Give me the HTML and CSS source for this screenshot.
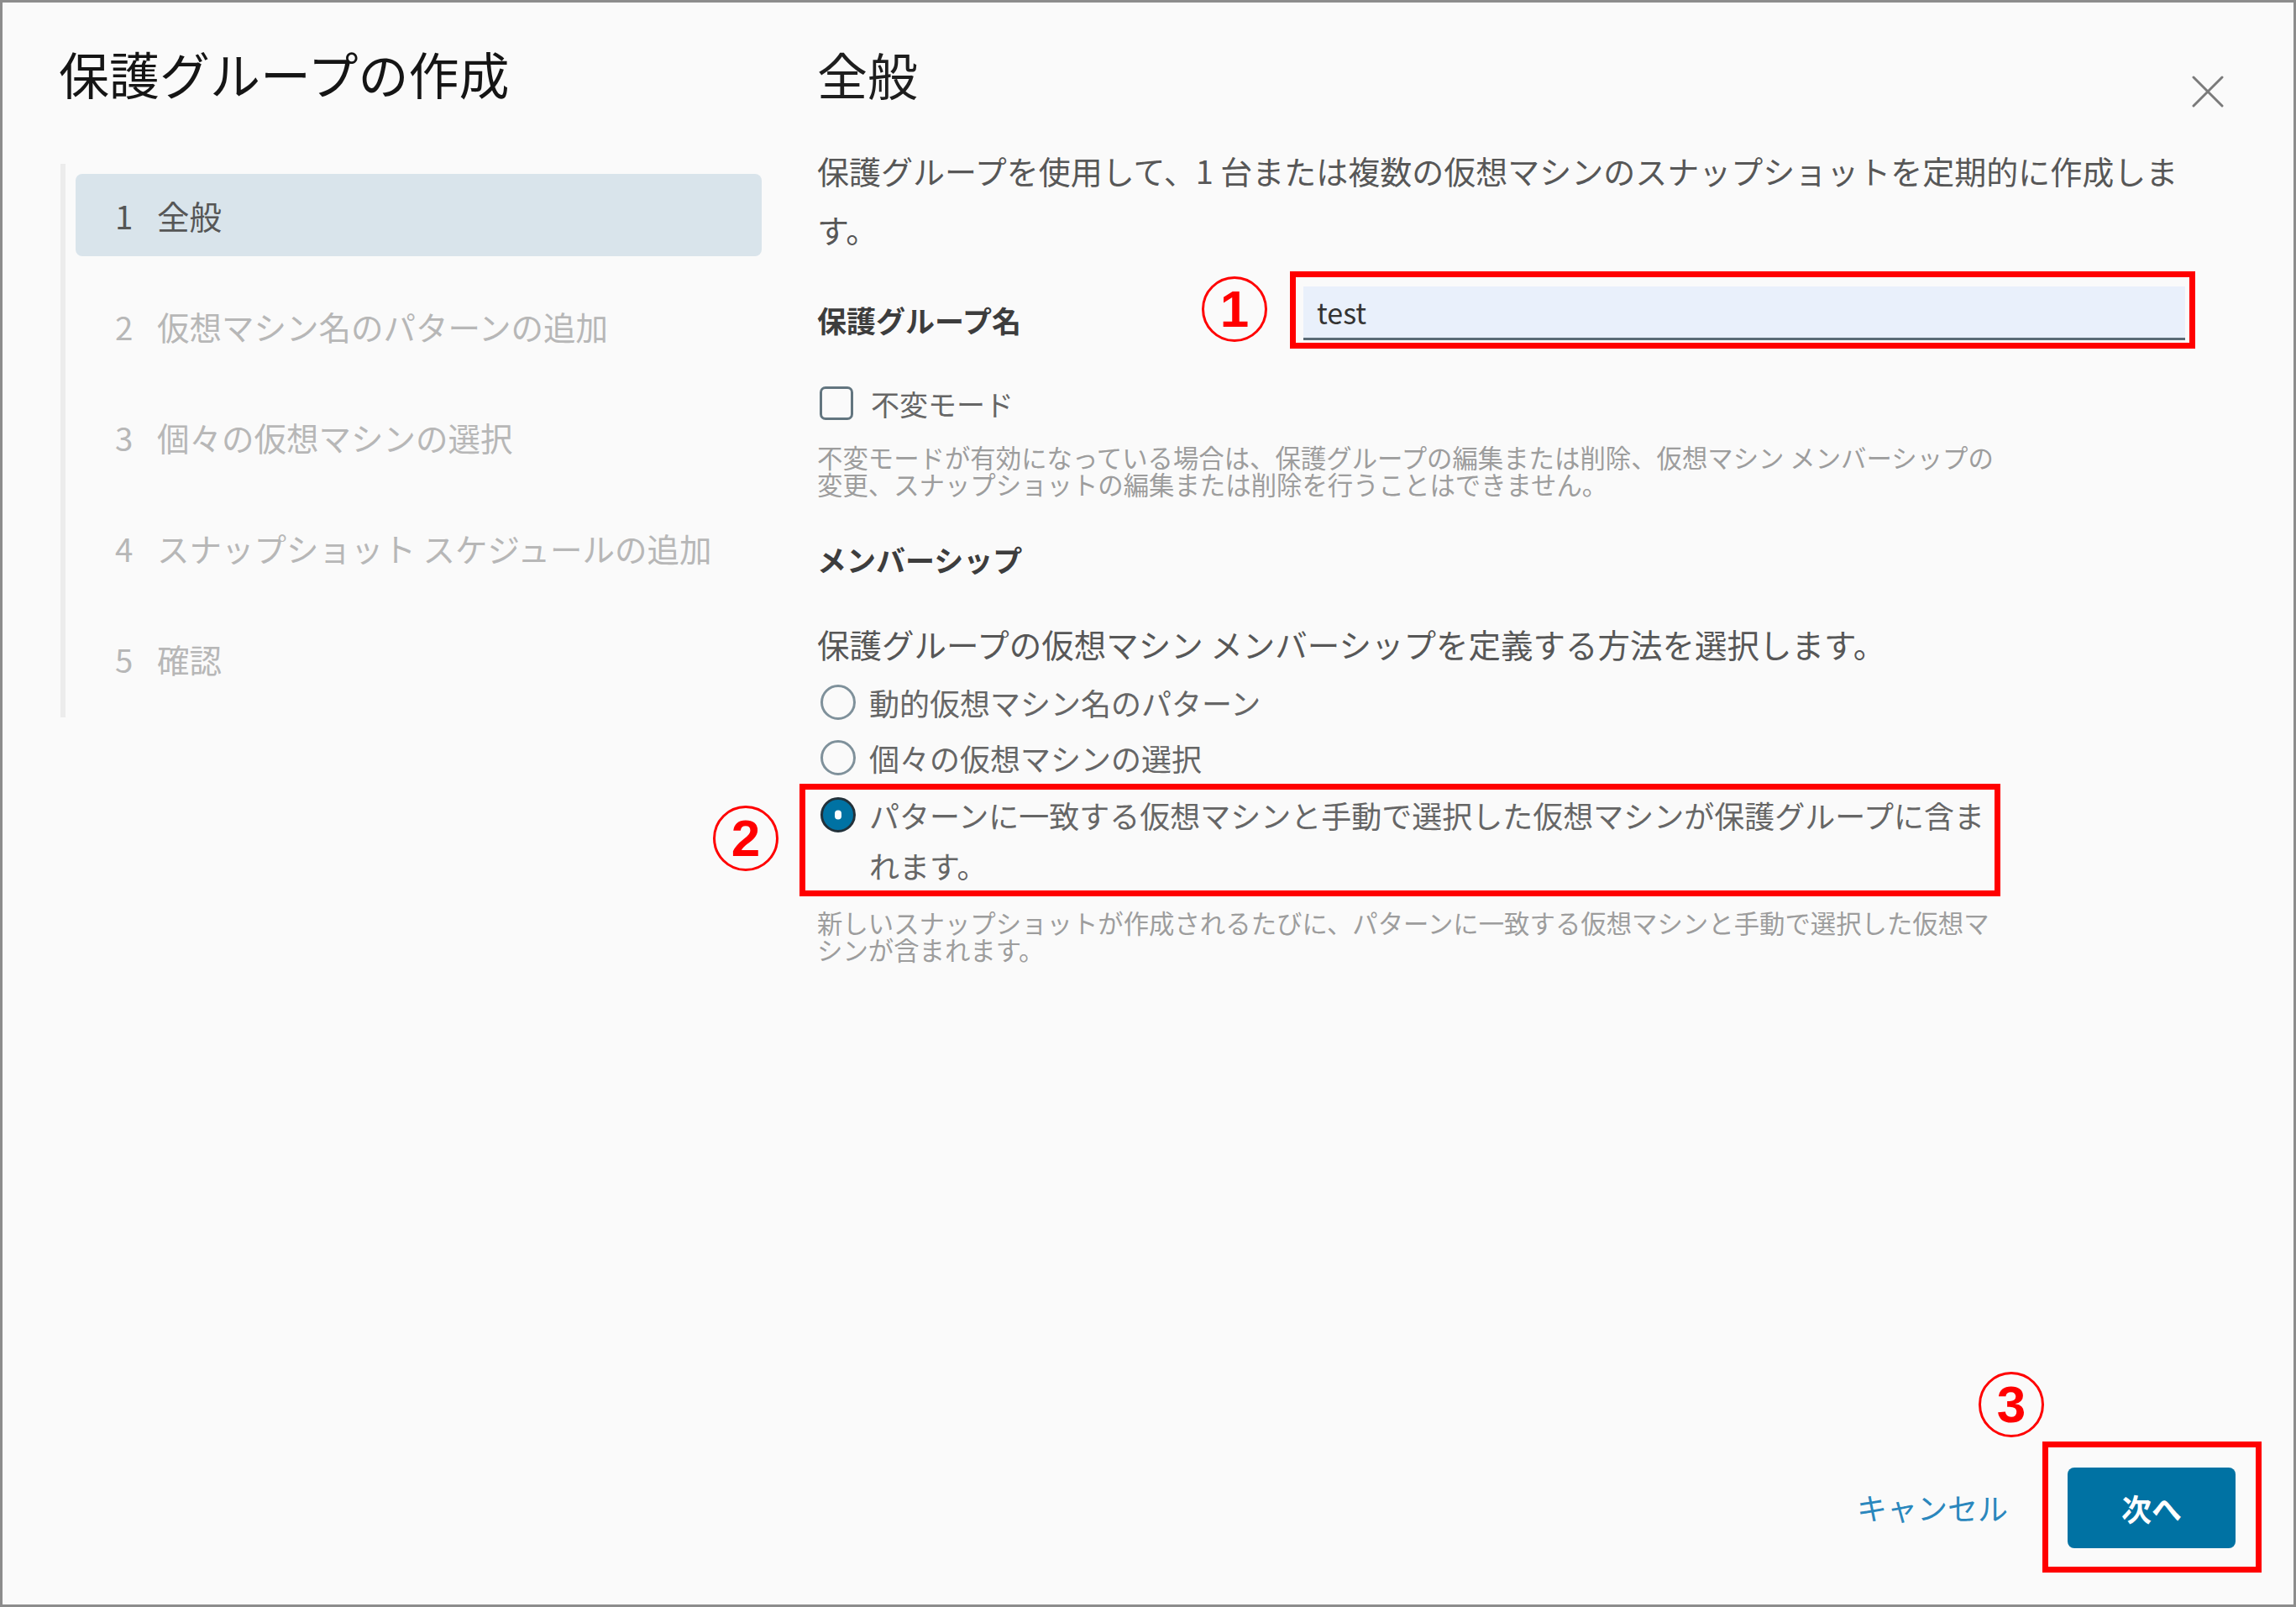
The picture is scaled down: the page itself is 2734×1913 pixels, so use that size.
FILE: index.html
```html
<!DOCTYPE html>
<html lang="ja">
<head>
  <meta charset="UTF-8" />
  <title>保護グループの作成</title>
  <link rel="stylesheet" href="styles.css">
</head>
<body>
  <div class="dialog">

    <!-- Wizard steps -->
    <aside class="sidebar">
      <h1 class="dialog-title">保護グループの作成</h1>
      <ol class="steps">
        <li class="step active"><span class="step-num">1</span>全般</li>
        <li class="step"><span class="step-num">2</span>仮想マシン名のパターンの追加</li>
        <li class="step"><span class="step-num">3</span>個々の仮想マシンの選択</li>
        <li class="step"><span class="step-num">4</span>スナップショット スケジュールの追加</li>
        <li class="step"><span class="step-num">5</span>確認</li>
      </ol>
    </aside>

    <main class="content">
      <div class="content-header">
        <h2 class="content-title">全般</h2>
        <button class="close-btn" aria-label="閉じる">
          <svg width="38" height="38" viewBox="0 0 38 38">
            <path d="M2 2 L36 36 M36 2 L2 36" stroke="#7a7a7a" stroke-width="3" fill="none" stroke-linecap="round" />
          </svg>
        </button>
      </div>

      <p class="intro">保護グループを使用して、1 台または複数の仮想マシンのスナップショットを定期的に作成します。</p>

      <div class="form-row">
        <label class="field-label" for="groupName">保護グループ名</label>
        <div class="mark mark-input">
          <span class="callout callout-1">1</span>
          <input type="text" id="groupName" class="text-input" value="test" autocomplete="off" />
        </div>
      </div>

      <label class="check-row">
        <span class="checkbox"></span>
        <span>不変モード</span>
      </label>
      <p class="helper">不変モードが有効になっている場合は、保護グループの編集または削除、仮想マシン メンバーシップの変更、スナップショットの編集または削除を行うことはできません。</p>

      <div class="section-label">メンバーシップ</div>
      <p class="prompt">保護グループの仮想マシン メンバーシップを定義する方法を選択します。</p>

      <div class="radio-group">
        <div class="radio-row">
          <span class="radio"></span>
          <span class="radio-text">動的仮想マシン名のパターン</span>
        </div>
        <div class="radio-row">
          <span class="radio"></span>
          <span class="radio-text">個々の仮想マシンの選択</span>
        </div>
        <div class="mark mark-radio">
          <span class="callout callout-2">2</span>
          <div class="radio-row">
            <span class="radio checked"></span>
            <span class="radio-text">パターンに一致する仮想マシンと手動で選択した仮想マシンが保護グループに含まれます。</span>
          </div>
        </div>
      </div>
      <p class="helper helper-last">新しいスナップショットが作成されるたびに、パターンに一致する仮想マシンと手動で選択した仮想マシンが含まれます。</p>

      <div class="footer">
        <a class="cancel-link">キャンセル</a>
        <div class="mark mark-button">
          <span class="callout callout-3">3</span>
          <button class="next-btn">次へ</button>
        </div>
      </div>
    </main>

  </div>
</body>
</html>
```

FILE: styles.css
```css
body {
  margin: 0;
  background: #fafafa;
  font-family: "Noto Sans CJK JP", "Noto Sans", sans-serif;
}

.dialog {
  width: 2734px;
  height: 1913px;
  box-sizing: border-box;
  border: 3px solid #8c8c8c;
  background: #fafafa;
  display: flex;
}

/* Sidebar / steps */
.sidebar {
  width: 970px;
  flex-shrink: 0;
  box-sizing: border-box;
  padding: 48px 0 0 67px;
}

.dialog-title {
  margin: 0;
  font-size: 60px;
  line-height: 72px;
  font-weight: 400;
  color: #151515;
}

.steps {
  list-style: none;
  margin: 72px 0 0 2px;
  padding: 12px 0 21px 12px;
  border-left: 6px solid #ececec;
  display: flex;
  flex-direction: column;
  gap: 34px;
}

.step {
  width: 817px;
  height: 98px;
  box-sizing: border-box;
  padding-left: 47px;
  display: flex;
  align-items: center;
  font-size: 38.5px;
  color: #b7b7b7;
  border-radius: 8px;
}

.step.active {
  background: #d9e4eb;
  color: #565656;
}

.step-num {
  width: 50px;
  flex-shrink: 0;
}

/* Main panel */
.content {
  flex: 1;
  display: flex;
  flex-direction: column;
  padding: 49px 38px 38px 0;
  min-width: 0;
}

.content-header {
  display: flex;
  justify-content: space-between;
  align-items: flex-start;
  height: 72px;
}

.content-title {
  margin: 0;
  font-size: 60px;
  line-height: 72px;
  font-weight: 400;
  color: #1e1e1e;
}

.close-btn {
  margin: 38px 45px 0 0;
  padding: 0;
  width: 38px;
  height: 38px;
  border: none;
  background: none;
  cursor: pointer;
}

.close-btn svg {
  display: block;
}

.intro {
  margin: 44px 0 0;
  max-width: 1650px;
  font-size: 38px;
  line-height: 70px;
  color: #575757;
}

.form-row {
  display: flex;
  margin-top: 15px;
}

.field-label {
  width: 563px;
  flex-shrink: 0;
  padding-top: 34px;
  font-size: 35px;
  line-height: 48px;
  font-weight: 700;
  color: #3d3d3d;
}

/* Red annotation boxes */
.mark {
  position: relative;
  border: 7px solid #ff0000;
}

.mark-input {
  padding: 11px 5px 3px 9px;
}

.mark-radio {
  margin: -5px 0 0 -21px;
  padding: 0 0 0 14px;
  align-self: flex-start;
}

.mark-button {
  padding: 24px 24px 22px 23px;
}

.callout {
  position: absolute;
  width: 78px;
  height: 78px;
  box-sizing: border-box;
  border: 3px solid #ff0000;
  border-radius: 50%;
  display: flex;
  justify-content: center;
  align-items: center;
  font-family: "Liberation Sans", Arial, sans-serif;
  font-weight: 700;
  font-size: 62px;
  line-height: 1;
  color: #ff0000;
}

.callout-1 {
  left: -112px;
  top: -1px;
}

.callout-2 {
  left: -110px;
  top: 19px;
}

.callout-3 {
  left: -83px;
  top: -90px;
}

.text-input {
  display: block;
  width: 1050px;
  height: 64px;
  box-sizing: border-box;
  border: none;
  border-bottom: 3px solid #5b6b76;
  background: #e9f0fb;
  padding: 0 16px;
  font-family: "Noto Sans CJK JP", "Noto Sans", sans-serif;
  font-size: 34px;
  color: #333;
  outline: none;
}

/* Checkbox */
.check-row {
  margin-top: 41px;
  height: 48px;
  display: flex;
  align-items: center;
  font-size: 34px;
  color: #666;
}

.checkbox {
  width: 40px;
  height: 40px;
  box-sizing: border-box;
  margin: 0 21px 0 3px;
  border: 3px solid #62757f;
  border-radius: 7px;
}

.helper {
  margin: 24px 0 0;
  width: 1415px;
  font-size: 30.4px;
  line-height: 32px;
  color: #9d9d9d;
}

.helper-last {
  margin-top: 15px;
}

.section-label {
  margin-top: 50px;
  font-size: 35px;
  line-height: 48px;
  font-weight: 700;
  color: #3d3d3d;
}

.prompt {
  margin: 52px 0 0;
  font-size: 38.5px;
  line-height: 48px;
  color: #575757;
}

/* Radios */
.radio-group {
  margin-top: 16px;
  display: flex;
  flex-direction: column;
  gap: 6px;
}

.radio-row {
  display: flex;
  align-items: flex-start;
}

.radio {
  width: 42px;
  height: 42px;
  box-sizing: border-box;
  flex-shrink: 0;
  margin: 9px 16px 0 4px;
  border: 3px solid #7f919b;
  border-radius: 50%;
  position: relative;
}

.radio.checked {
  background: #0072a3;
  border-color: #22313a;
}

.radio.checked::after {
  content: "";
  position: absolute;
  left: 50%;
  top: 50%;
  width: 8px;
  height: 11px;
  border-radius: 4px;
  background: #fff;
  transform: translate(-50%, -50%);
}

.radio-text {
  font-size: 36px;
  line-height: 60px;
  color: #666;
}

.mark-radio .radio-text {
  width: 1340px;
}

/* Footer */
.footer {
  margin-top: auto;
  display: flex;
  justify-content: flex-end;
  align-items: center;
}

.cancel-link {
  margin-right: 41px;
  font-size: 36px;
  color: #2a87bd;
  cursor: pointer;
}

.next-btn {
  display: block;
  width: 200px;
  height: 96px;
  border: none;
  border-radius: 8px;
  background: #0072a3;
  color: #fff;
  font-family: "Noto Sans CJK JP", "Noto Sans", sans-serif;
  font-size: 36px;
  font-weight: 700;
  cursor: pointer;
}
```
